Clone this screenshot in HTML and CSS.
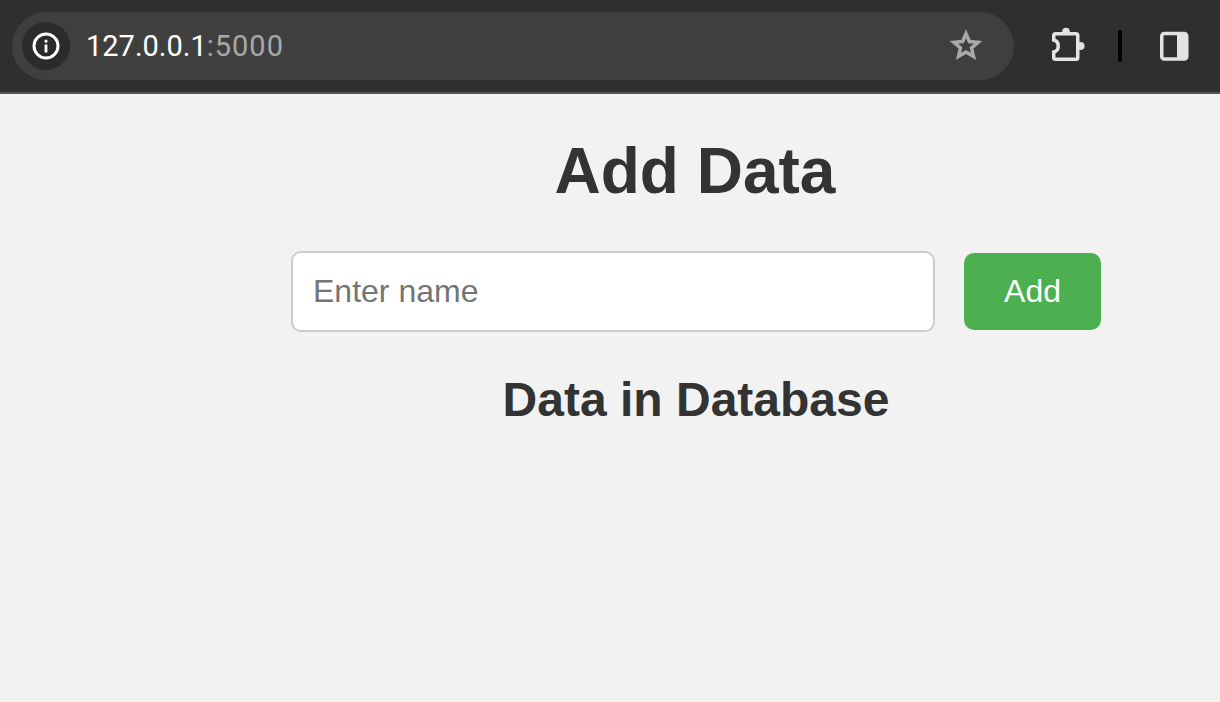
FILE: index.html
```html
<!DOCTYPE html>
<html>
<head>
	<title>Add Data</title>
	<link rel="stylesheet" href="styles.css">
</head>
<body>
	<header class="toolbar">
		<div class="omnibox">
			<span class="site-info">
				<svg width="30" height="30" viewBox="0 0 30 30">
					<circle cx="15" cy="15" r="12" fill="none" stroke="#fff" stroke-width="3"/>
					<rect x="13.6" y="13.5" width="2.8" height="8" fill="#fff"/>
					<rect x="13.6" y="8.8" width="2.8" height="2.8" fill="#fff"/>
				</svg>
			</span>
			<span class="url">127.0.0.1<span class="port">:5000</span></span>
			<svg class="star" width="36" height="36" viewBox="0 0 36 36">
				<path d="M18 5.700L21.400 13.500L30.100 14.300L23.500 19.900L25.500 28.400L18 24L10.500 28.400L12.500 19.900L5.900 14.300L14.600 13.500Z" fill="none" stroke="#a9a9a9" stroke-width="3.500"/>
			</svg>
		</div>
		<div class="actions">
			<svg class="puzzle" width="40" height="40" viewBox="0 0 40 40">
				<circle cx="16" cy="5.500" r="3.800" fill="#e3e3e3"/>
				<circle cx="30.500" cy="20" r="4" fill="#e3e3e3"/>
				<path d="M5.500 7.750H26a1.750 1.750 0 0 1 1.750 1.750V31.500a1.750 1.750 0 0 1-1.750 1.750H5.500a1.750 1.750 0 0 1-1.750-1.750V26c3-.6 4.500-3 4.500-6s-1.500-5.400-4.500-6V9.500a1.750 1.750 0 0 1 1.750-1.750z" fill="none" stroke="#e3e3e3" stroke-width="3.500"/>
			</svg>
			<span class="divider"></span>
			<svg class="panel" width="30" height="30" viewBox="0 0 30 30">
				<rect x="2.750" y="2.500" width="25" height="25.400" rx="2.500" fill="none" stroke="#e3e3e3" stroke-width="3.500"/>
				<rect x="18" y="3" width="10" height="24" fill="#e3e3e3"/>
			</svg>
		</div>
	</header>

	<main class="content">
		<h1>Add Data</h1>
		<form class="add-form">
			<input class="name-input" type="text" placeholder="Enter name">
			<button class="add-btn" type="button">Add</button>
		</form>
		<h2>Data in Database</h2>
	</main>
</body>
</html>
```

FILE: styles.css
```css
html {height:100%;}
body {margin:0; height:100%; overflow:hidden; background:#f2f2f2; color:#333;
	font-family:"Liberation Sans", Arial, sans-serif;}

.toolbar {display:flex; align-items:flex-start; box-sizing:border-box; height:94px;
	padding:12px 0 0 12px; background:#2f2f2f; border-bottom:2px solid #555;}
.omnibox {display:flex; align-items:center; box-sizing:border-box; width:1002px; height:68px;
	padding:0 30px 0 10px; background:#3f3f3f; border-radius:34px;}
.site-info {display:flex; align-items:center; justify-content:center; width:48px; height:48px;
	border-radius:50%; background:#2b2b2b;}
.url {flex:1; margin-left:16px; font-family:Roboto, sans-serif; font-size:29px; color:#fff;}
.port {color:#a8a8a8; letter-spacing:1px;}
.actions {display:flex; align-items:center; height:68px; padding-left:36px;}
.divider {width:4px; height:32px; margin:0 37px 0 28px; background:#000; border-radius:2px;}

.content {display:flex; flex-direction:column; align-items:center; padding:0 119px 0 291px;}
h1 {margin:39px 0 0; padding-right:2px; font-size:64px; line-height:76px;}
.add-form {display:flex; align-items:center; width:100%; gap:29px; margin-top:42px;}
.name-input {flex:1; min-width:0; box-sizing:border-box; height:81px; padding:0 20px;
	border:2px solid #ccc; border-radius:10px; background:#fff; outline:none;
	font-family:"Liberation Sans", Arial, sans-serif; font-size:32px;}
.name-input::placeholder {color:#757575;}
.add-btn {width:137px; height:77px; border:none; border-radius:10px; background:#4caf50; color:#fff;
	font-family:"Liberation Sans", Arial, sans-serif; font-size:32px;}
h2 {margin:40px 0 0; font-size:48px; line-height:56px;}
```
